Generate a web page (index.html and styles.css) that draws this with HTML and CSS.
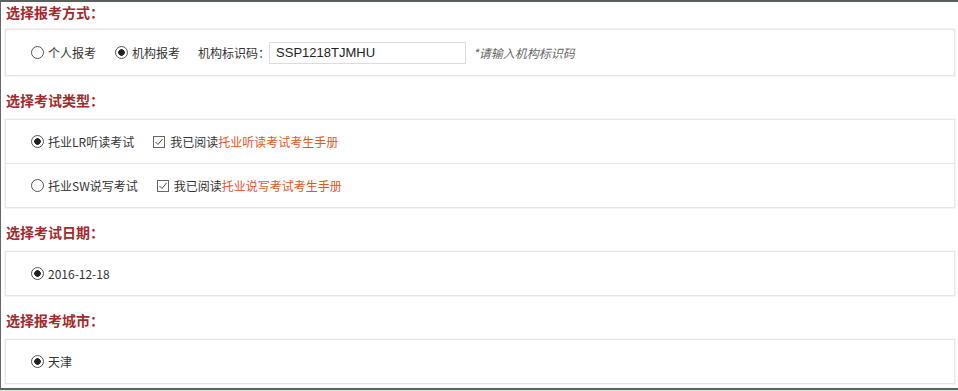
FILE: index.html
```html
<!DOCTYPE html>
<html lang="zh-CN">

<head>
  <meta charset="UTF-8" />
  <title>选择报考方式</title>
  <link rel="stylesheet" href="styles.css">
</head>

<body>
  <div class="frame">
    <h3 class="title first">选择报考方式：</h3>
    <div class="box">
      <div class="row">
        <label class="opt"><input type="radio" name="way" />个人报考</label>
        <label class="opt"><input type="radio" name="way" checked />机构报考</label>
        <span class="field">机构标识码：</span>
        <input class="code" type="text" value="SSP1218TJMHU" />
        <span class="hint">*请输入机构标识码</span>
      </div>
    </div>

    <h3 class="title">选择考试类型：</h3>
    <div class="box">
      <div class="row">
        <label class="opt"><input type="radio" name="exam" checked />托业LR听读考试</label>
        <label class="agree">
          <span class="check"><svg width="10" height="10" viewBox="0 0 10 10"><polyline points="1.5,5 4,7.5 8.5,2" /></svg></span>
          我已阅读<a href="#">托业听读考试考生手册</a>
        </label>
      </div>
      <div class="row">
        <label class="opt"><input type="radio" name="exam" />托业SW说写考试</label>
        <label class="agree">
          <span class="check"><svg width="10" height="10" viewBox="0 0 10 10"><polyline points="1.5,5 4,7.5 8.5,2" /></svg></span>
          我已阅读<a href="#">托业说写考试考生手册</a>
        </label>
      </div>
    </div>

    <h3 class="title">选择考试日期：</h3>
    <div class="box">
      <div class="row">
        <label class="opt"><input type="radio" name="date" checked />2016-12-18</label>
      </div>
    </div>

    <h3 class="title">选择报考城市：</h3>
    <div class="box">
      <div class="row">
        <label class="opt"><input type="radio" name="city" checked />天津</label>
      </div>
    </div>
  </div>
</body>

</html>
```

FILE: styles.css
```css
body {
  margin: 0;
  padding: 0;
  background-color: #d6e7d5;
  font-family: "Noto Sans CJK SC", sans-serif;
  font-size: 12px;
  color: #333;
}

.frame {
  background-color: #fff;
  border-top: 2px solid #5b5f5b;
  border-left: 1px solid #666;
  border-bottom: 2px solid #5b655b;
  padding: 0 3px 4px 4px;
}

.title {
  margin: 14px 0 9px 1px;
  font-size: 14px;
  line-height: 20px;
  font-weight: bold;
  color: #a12a2c;
}

.title.first {
  margin-top: 0;
  margin-bottom: 7px;
}

.box {
  border: 1px solid #e6e6e6;
  box-shadow: 0 0 0 1px #f5f5f5;
}

.row {
  display: flex;
  align-items: center;
  height: 43px;
  padding-left: 25px;
}

.row + .row {
  border-top: 1px solid #e8e8e8;
}

.box:first-of-type .row {
  height: 45px;
}

.opt {
  display: flex;
  align-items: center;
  margin-right: 19px;
}

.opt input {
  appearance: none;
  width: 13px;
  height: 13px;
  margin: 0 4px 0 0;
  border: 1px solid #555;
  border-radius: 50%;
  box-sizing: border-box;
  background: #fff;
}

.opt input:checked {
  background: radial-gradient(circle, #222 0, #222 3px, #fff 3.5px);
}

.field {
  margin-left: -1px;
}

.code {
  width: 197px;
  height: 22px;
  box-sizing: border-box;
  margin: 0 7px 0 -1px;
  padding: 0 6px;
  border: 1px solid #dcdcdc;
  font-family: "Liberation Sans", sans-serif;
  font-size: 13px;
  color: #222;
}

.hint {
  font-style: italic;
  color: #666;
}

.agree {
  display: flex;
  align-items: center;
}

.check {
  display: inline-flex;
  align-items: center;
  justify-content: center;
  width: 12px;
  height: 12px;
  margin-right: 5px;
  border: 1px solid #666;
  box-sizing: border-box;
}

.check polyline {
  fill: none;
  stroke: #444;
  stroke-width: 1;
}

.agree a {
  color: #e8541e;
  text-decoration: none;
}
```
